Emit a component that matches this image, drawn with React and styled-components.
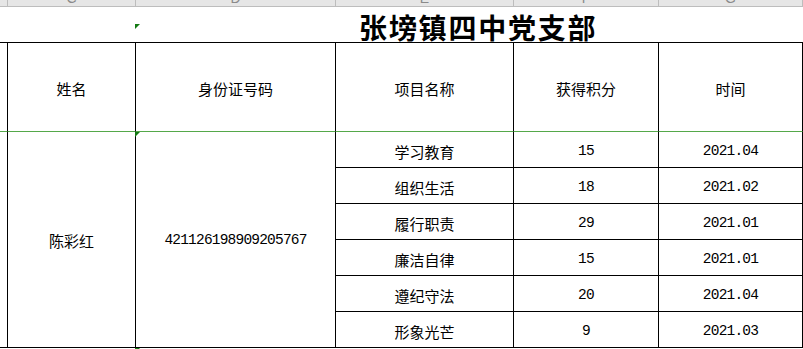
import React from 'react';
import styled, { createGlobalStyle } from 'styled-components';

const Global = createGlobalStyle`
  html, body { margin: 0; padding: 0; background: #fff; }
  body { overflow: hidden; font-family: "Noto Sans CJK SC", sans-serif; }
`;

const Sheet = styled.div`
  display: grid;
  grid-template-columns: 8px 128px 200px 178px 145px 144px;
  grid-template-rows: 7px 36px 89px repeat(6, 36px) 1px;
  width: 803px;
  height: 349px;
  overflow: hidden;
  background: #fff;
`;

const ColHead = styled.div`
  box-sizing: border-box;
  background: #e6e6e6;
  border-right: 1px solid #bdbdbd;
  border-bottom: 1px solid #bdbdbd;
  display: flex;
  align-items: flex-end;
  justify-content: center;
  overflow: hidden;
  font-family: "Liberation Sans", sans-serif;
  font-size: 14px;
  line-height: 14px;
  color: #8a8a8a;
`;

const ColLetter = styled.span`
  margin-bottom: 1px;
`;

const TitleCell = styled.div`
  grid-column: 1 / -1;
  position: relative;
  box-sizing: border-box;
  border-bottom: 1px solid #000;
  display: flex;
  align-items: center;
  padding: 5px 0 0 359px;
  font-family: "Noto Sans CJK SC", sans-serif;
  font-weight: 700;
  font-size: 28px;
  letter-spacing: 1.8px;
  line-height: 1;
  color: #000;
  white-space: nowrap;
`;

const Cell = styled.div`
  position: relative;
  box-sizing: border-box;
  border-right: 1px solid #000;
  border-bottom: 1px solid ${(p) => p.$bottom || '#000'};
  grid-row: ${(p) => (p.$rows ? `span ${p.$rows}` : 'auto')};
  display: flex;
  align-items: center;
  justify-content: center;
  padding-top: ${(p) => (p.$pt ?? 3)}px;
  font-family: ${(p) =>
    p.$latin ? '"Liberation Mono", monospace' : '"Noto Sans CJK SC", sans-serif'};
  font-size: ${(p) => (p.$latin ? '14.5px' : '15px')};
  letter-spacing: ${(p) => (p.$latin ? '-0.8px' : '0')};
  color: #000;
  white-space: nowrap;
`;

const EndRow = styled.div`
  grid-column: 1 / -1;
  position: relative;
`;

const ErrorMark = styled.span`
  position: absolute;
  left: ${(p) => p.$x}px;
  top: ${(p) => p.$y}px;
  width: 0;
  height: 0;
  border-top: 5px solid #137a13;
  border-right: 5px solid transparent;
  z-index: 2;
`;

const letters = ['', 'C', 'D', 'E', 'F', 'G'];
const headers = ['', '姓名', '身份证号码', '项目名称', '获得积分', '时间'];
const items = [
  ['学习教育', '15', '2021.04'],
  ['组织生活', '18', '2021.02'],
  ['履行职责', '29', '2021.01'],
  ['廉洁自律', '15', '2021.01'],
  ['遵纪守法', '20', '2021.04'],
  ['形象光芒', '9', '2021.03'],
];

export default function App() {
  return (
    <>
      <Global />
      <Sheet>
        {letters.map((l, i) => (
          <ColHead key={`c${i}`}>
            <ColLetter>{l}</ColLetter>
          </ColHead>
        ))}
        <TitleCell>
          张塝镇四中党支部
          <ErrorMark $x={135} $y={17} />
        </TitleCell>
        {headers.map((h, i) => (
          <Cell key={`h${i}`} $bottom="#55a84a">
            {h}
          </Cell>
        ))}
        <Cell $rows={6} />
        <Cell $rows={6} $pt={1}>陈彩红</Cell>
        <Cell $rows={6} $pt={1} $latin>
          421126198909205767
          <ErrorMark $x={-1} $y={0} />
        </Cell>
        {items.map(([name, score, time]) => (
          <React.Fragment key={name}>
            <Cell>{name}</Cell>
            <Cell $latin>{score}</Cell>
            <Cell $latin>{time}</Cell>
          </React.Fragment>
        ))}
        <EndRow>
          <ErrorMark $x={135} $y={0} />
        </EndRow>
      </Sheet>
    </>
  );
}
